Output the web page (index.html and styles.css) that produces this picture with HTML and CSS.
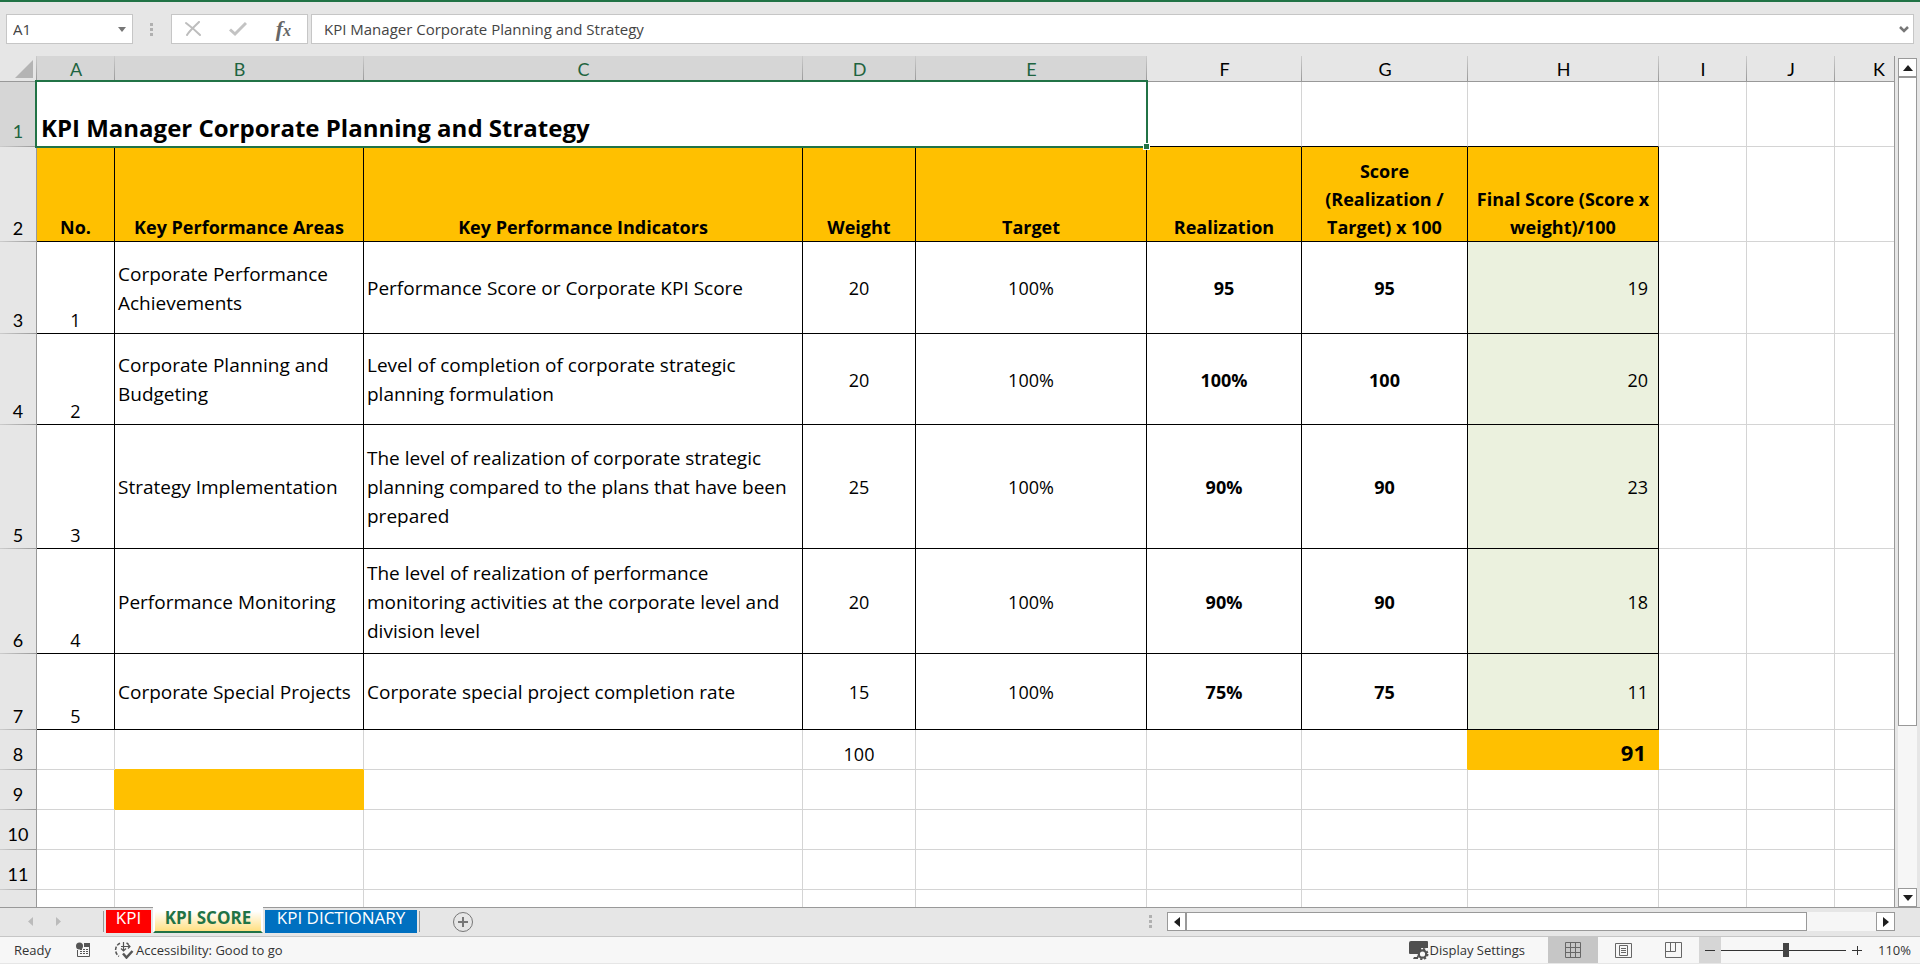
FILE: index.html
```html
<!DOCTYPE html>
<html lang="en">
<head>
<meta charset="utf-8">
<title>KPI Manager Corporate Planning and Strategy</title>
<link rel="stylesheet" href="styles.css">
</head>
<body>
<div class="app">
  <header class="formula-bar">
    <div class="name-box">
      <input class="name-input" type="text" value="A1" aria-label="Name box">
      <button class="plain name-drop" aria-label="Open name list"><svg width="8" height="5" viewBox="0 0 8 5"><path d="M0 0h8L4 5z" fill="#777"/></svg></button>
    </div>
    <svg class="grip" width="3" height="13" viewBox="0 0 3 13"><path d="M0 0h3v3H0zM0 5h3v3H0zM0 10h3v3H0z" fill="#b0b0b0"/></svg>
    <div class="entry-tools">
      <button class="plain" aria-label="Cancel"><svg width="16" height="16" viewBox="0 0 16 16"><path d="M1 2C5 5 11 10 15 14M14 1C10 5 5 9 2 14" fill="none" stroke="#bdbdbd" stroke-width="2" stroke-linecap="round"/></svg></button>
      <button class="plain" aria-label="Enter"><svg width="18" height="16" viewBox="0 0 18 16"><path d="M1 8.500L6 13L17 2" fill="none" stroke="#c3c3c3" stroke-width="3"/></svg></button>
      <button class="plain fx" aria-label="Insert function">f<span class="fx-x">x</span></button>
    </div>
    <div class="formula-box">
      <input class="formula-input" type="text" value="KPI Manager Corporate Planning and Strategy" aria-label="Formula">
      <button class="plain formula-drop" aria-label="Expand formula bar"><svg width="10" height="7" viewBox="0 0 10 7"><path d="M1 1L5 5L9 1" fill="none" stroke="#777" stroke-width="2.500"/></svg></button>
    </div>
  </header>

  <main class="workspace">
    <div class="grid">
      <table class="sheet">
        <colgroup>
          <col class="w-row"><col class="w-a"><col class="w-b"><col class="w-c"><col class="w-d"><col class="w-e"><col class="w-f"><col class="w-g"><col class="w-h"><col class="w-i"><col class="w-i"><col class="w-i">
        </colgroup>
        <thead>
          <tr>
            <th class="corner"><svg width="18" height="18" viewBox="0 0 18 18"><path d="M18 0v18H0z" fill="#b4b4b4"/></svg></th>
            <th class="on" scope="col">A</th><th class="on" scope="col">B</th><th class="on" scope="col">C</th><th class="on" scope="col">D</th><th class="on" scope="col">E</th><th scope="col">F</th><th scope="col">G</th><th scope="col">H</th><th scope="col">I</th><th scope="col">J</th><th scope="col">K</th>
          </tr>
        </thead>
        <tbody>
          <tr class="r1">
            <th class="on" scope="row">1</th>
            <td class="title" colspan="5">KPI Manager Corporate Planning and Strategy<span class="selection"><span class="handle"></span></span></td>
            <td class="over"></td><td class="over"></td><td class="over"></td><td></td><td></td><td></td>
          </tr>
          <tr class="r2 heads">
            <th scope="row">2</th>
            <td>No.</td><td>Key Performance Areas</td><td>Key Performance Indicators</td><td>Weight</td><td>Target</td><td>Realization</td><td>Score<br>(Realization /<br>Target) x 100</td><td>Final Score (Score x<br>weight)/100</td><td></td><td></td><td></td>
          </tr>
          <tr class="r3 data">
            <th scope="row">3</th>
            <td>1</td><td>Corporate Performance<br>Achievements</td><td>Performance Score or Corporate KPI Score</td><td>20</td><td>100%</td><td>95</td><td>95</td><td>19</td><td></td><td></td><td></td>
          </tr>
          <tr class="r4 data">
            <th scope="row">4</th>
            <td>2</td><td>Corporate Planning and<br>Budgeting</td><td>Level of completion of corporate strategic<br>planning formulation</td><td>20</td><td>100%</td><td>100%</td><td>100</td><td>20</td><td></td><td></td><td></td>
          </tr>
          <tr class="r5 data">
            <th scope="row">5</th>
            <td>3</td><td>Strategy Implementation</td><td>The level of realization of corporate strategic<br>planning compared to the plans that have been<br>prepared</td><td>25</td><td>100%</td><td>90%</td><td>90</td><td>23</td><td></td><td></td><td></td>
          </tr>
          <tr class="r6 data">
            <th scope="row">6</th>
            <td>4</td><td>Performance Monitoring</td><td>The level of realization of performance<br>monitoring activities at the corporate level and<br>division level</td><td>20</td><td>100%</td><td>90%</td><td>90</td><td>18</td><td></td><td></td><td></td>
          </tr>
          <tr class="r7 data">
            <th scope="row">7</th>
            <td>5</td><td>Corporate Special Projects</td><td>Corporate special project completion rate</td><td>15</td><td>100%</td><td>75%</td><td>75</td><td>11</td><td></td><td></td><td></td>
          </tr>
          <tr class="short">
            <th scope="row">8</th>
            <td></td><td class="over-fill"></td><td></td><td class="sum">100</td><td></td><td></td><td class="before-fill"></td><td class="total">91</td><td></td><td></td><td></td>
          </tr>
          <tr class="short">
            <th scope="row">9</th>
            <td class="before-fill"></td><td class="fill"></td><td></td><td></td><td></td><td></td><td></td><td></td><td></td><td></td><td></td>
          </tr>
          <tr class="short">
            <th scope="row">10</th>
            <td></td><td></td><td></td><td></td><td></td><td></td><td></td><td></td><td></td><td></td><td></td>
          </tr>
          <tr class="short">
            <th scope="row">11</th>
            <td></td><td></td><td></td><td></td><td></td><td></td><td></td><td></td><td></td><td></td><td></td>
          </tr>
          <tr class="short">
            <th></th>
            <td></td><td></td><td></td><td></td><td></td><td></td><td></td><td></td><td></td><td></td><td></td>
          </tr>
        </tbody>
      </table>
    </div>
    <div class="vscroll">
      <button class="plain arrow" aria-label="Scroll up"><svg width="10" height="6" viewBox="0 0 10 6"><path d="M0 6h10L5 0z" fill="#1e1e1e"/></svg></button>
      <div class="track"><div class="thumb"></div></div>
      <button class="plain arrow" aria-label="Scroll down"><svg width="10" height="6" viewBox="0 0 10 6"><path d="M0 0h10L5 6z" fill="#1e1e1e"/></svg></button>
    </div>
  </main>

  <nav class="tab-bar" aria-label="Sheets">
    <div class="tab-nav">
      <button class="plain" aria-label="Previous sheets"><svg width="5" height="9" viewBox="0 0 5 9"><path d="M5 0v9L0 4.500z" fill="#bbb"/></svg></button>
      <button class="plain" aria-label="Next sheets"><svg width="5" height="9" viewBox="0 0 5 9"><path d="M0 0v9L5 4.500z" fill="#bbb"/></svg></button>
    </div>
    <div class="tabs">
      <button class="plain tab red">KPI</button>
      <button class="plain tab active">KPI SCORE</button>
      <button class="plain tab blue">KPI DICTIONARY</button>
    </div>
    <button class="plain add" aria-label="New sheet"><svg width="22" height="22" viewBox="0 0 22 22"><circle cx="11" cy="11" r="9.500" fill="none" stroke="#777"/><path d="M11 6v10M6 11h10" stroke="#777" stroke-width="2"/></svg></button>
    <svg class="grip" width="3" height="13" viewBox="0 0 3 13"><path d="M0 0h3v3H0zM0 5h3v3H0zM0 10h3v3H0z" fill="#b0b0b0"/></svg>
    <div class="hscroll">
      <button class="plain arrow" aria-label="Scroll left"><svg width="6" height="10" viewBox="0 0 6 10"><path d="M6 0v10L0 5z" fill="#1e1e1e"/></svg></button>
      <div class="track"><div class="thumb"></div></div>
      <button class="plain arrow" aria-label="Scroll right"><svg width="6" height="10" viewBox="0 0 6 10"><path d="M0 0v10L6 5z" fill="#1e1e1e"/></svg></button>
    </div>
  </nav>

  <footer class="status-bar">
    <span class="ready">Ready</span>
    <button class="plain macro" aria-label="Record macro"><svg width="15" height="16" viewBox="0 0 15 16"><path d="M1.500 8v6.500h12V2" fill="none" stroke="#555"/><path d="M8 1h6v4H8z" fill="#555"/><circle cx="3.500" cy="4" r="3.500" fill="#555"/><path d="M4 7.500h2m1 0h2m1 0h2M4 9.500h2m1 0h2m1 0h2M4 11.500h2m1 0h2m1 0h2" stroke="#555"/></svg></button>
    <button class="plain access"><svg width="20" height="17" viewBox="0 0 20 17"><path d="M6 1.200A7.500 7.500 0 0 0 5 14.300M14.500 2.500A7 7 0 0 0 12.500 1" fill="none" stroke="#555" stroke-width="1.500" stroke-dasharray="3.500 1.500"/><path d="M9.500 0v9M7 6.500l2.500 2.500L12 6.500M7 4.500h9M14 2.500l2 2-2 2" fill="none" stroke="#555" stroke-width="1.200"/><path d="M9 11.500l3.500 4L18.500 9" fill="none" stroke="#555" stroke-width="2.500"/></svg>Accessibility: Good to go</button>
    <button class="plain display"><svg width="20" height="19" viewBox="0 0 20 19"><path d="M2 0h16a1 1 0 0 1 1 1v6H12v3l-3 3H1a1 1 0 0 1-1-1V2a2 2 0 0 1 2-2zM5 16h4v2H4z" fill="#505050"/><circle cx="13.500" cy="13" r="3.700" fill="none" stroke="#505050" stroke-width="2.200"/><circle cx="13.500" cy="13" r="5.200" fill="none" stroke="#505050" stroke-width="1.600" stroke-dasharray="2.200 1.880"/></svg>Display Settings</button>
    <div class="views">
      <button class="plain view current" aria-label="Normal"><svg width="16" height="16" viewBox="0 0 16 16"><path d="M.5.500h15v15H.500zM5.500 0v16M10.500 0v16M0 5.500h16M0 10.500h16" fill="none" stroke="#666"/></svg></button>
      <button class="plain view" aria-label="Page layout"><svg width="17" height="15" viewBox="0 0 17 15"><path d="M.5.500h16v14H.500zM4.500 2.500h8v10h-8zM6 5.500h5M6 7.500h5M6 9.500h5" fill="none" stroke="#666"/></svg></button>
      <button class="plain view" aria-label="Page break preview"><svg width="17" height="16" viewBox="0 0 17 16"><path d="M.5.500h16v15H.500zM.5 9.500h10V.500M5.500.500v9" fill="none" stroke="#666"/></svg></button>
    </div>
    <div class="zoom">
      <button class="plain zoom-out" aria-label="Zoom out"><svg width="10" height="10" viewBox="0 0 10 10"><path d="M0 5.500h10" stroke="#333"/></svg></button>
      <input class="zoom-range" type="range" min="0" max="100" value="52" aria-label="Zoom">
      <button class="plain zoom-in" aria-label="Zoom in"><svg width="10" height="10" viewBox="0 0 10 10"><path d="M0 5.500h10M5.500 1v9" stroke="#333"/></svg></button>
      <button class="plain percent">110%</button>
    </div>
  </footer>
</div>
</body>
</html>
```
FILE: styles.css
```css
:root {
  --green: #217346;
  --gold: #ffc000;
  --chrome: #e6e6e6;
  --line: #d4d4d4;
  --edge: #999;
  --ui: "Open Sans", "Noto Sans", sans-serif;
  --head: Lato, "Open Sans", sans-serif;
}

* { box-sizing: border-box; }

body {
  margin: 0;
  background: #fff;
  color: #000;
  font-family: var(--ui);
}

.app {
  display: flex;
  flex-direction: column;
  height: 100vh;
  padding-bottom: 1px;
  overflow: hidden;
  background: var(--chrome);
}

.plain {
  display: inline-flex;
  align-items: center;
  justify-content: center;
  margin: 0;
  padding: 0;
  border: 0;
  background: none;
  color: inherit;
  font: inherit;
}

svg { display: block; flex: none; }

/* Formula bar */
.formula-bar {
  display: flex;
  flex: none;
  align-items: center;
  height: 56px;
  padding: 0 6px;
  border-top: 2px solid var(--green);
}

.name-box, .entry-tools, .formula-box {
  display: flex;
  align-items: center;
  height: 30px;
  border: 1px solid #c6c6c6;
  background: #fff;
}

.name-box { width: 127px; padding: 0 6px; }
.formula-bar .grip { margin: 0 18px 0 17px; }
.entry-tools { width: 137px; justify-content: space-between; padding: 0 16px 0 13px; }
.formula-box { flex: 1; margin-left: 3px; padding: 0 4px 0 12px; }

.name-input, .formula-input {
  flex: 1;
  min-width: 0;
  padding: 0;
  border: 0;
  outline: 0;
  background: none;
  color: #444;
  font: 15px/20px var(--ui);
}

.fx { color: #666; font: italic bold 22px/24px "Liberation Serif", serif; }
.fx-x { padding-top: 4px; font-size: 16px; }

/* Grid */
.workspace {
  display: flex;
  flex: 1;
  min-height: 0;
  padding-right: 3px;
}

.grid {
  flex: 1;
  min-width: 0;
  overflow: hidden;
  margin-right: 3px;
  border-right: 1px solid var(--edge);
}

.sheet {
  width: 1923px;
  table-layout: fixed;
  border-collapse: separate;
  border-spacing: 0;
  font-size: 18px;
  line-height: 29px;
  white-space: nowrap;
}

.w-row { width: 37px; }
.w-a { width: 78px; }
.w-b { width: 249px; }
.w-c { width: 439px; }
.w-d { width: 113px; }
.w-e { width: 231px; }
.w-f { width: 155px; }
.w-g { width: 166px; }
.w-h { width: 191px; }
.w-i { width: 88px; }

.sheet th {
  padding: 0;
  background: linear-gradient(90deg, #ccc, var(--edge)) bottom / 100% 1px no-repeat var(--chrome);
  border-right: 1px solid var(--edge);
  font-family: var(--head);
  font-weight: 400;
  line-height: 27px;
  text-align: center;
  vertical-align: bottom;
}

.sheet thead th {
  height: 26px;
  background: linear-gradient(#ccc, var(--edge)) right / 1px 100% no-repeat var(--chrome);
  border-right: 0;
  border-bottom: 1px solid var(--edge);
  line-height: 23px;
}

.sheet th.on { background-color: #d6d6d6; color: #1e6440; }
.sheet .corner svg { margin: 0 0 3px 15px; }
.sheet .r1 th { line-height: 31px; }
.sheet .short th { line-height: 31px; }

.sheet td {
  padding: 0 3px;
  background: #fff;
  border-right: 1px solid var(--line);
  border-bottom: 1px solid var(--line);
}

.r1 { height: 65px; }
.r2 { height: 95px; }
.r3 { height: 92px; }
.r4 { height: 91px; }
.r5 { height: 124px; }
.r6 { height: 105px; }
.r7 { height: 76px; }
.short { height: 40px; }

.sheet .title {
  position: relative;
  padding: 0 4px;
  font-size: 24px;
  font-weight: 700;
  line-height: 37px;
  vertical-align: bottom;
}

.selection {
  position: absolute;
  z-index: 1;
  inset: -2px;
  border: 2px solid var(--green);
}

.handle {
  position: absolute;
  right: -4px;
  bottom: -4px;
  width: 7px;
  height: 7px;
  border: 1px solid #fff;
  background: var(--green);
}

.sheet .over { border-bottom-color: #000; }

.heads td:nth-child(-n+9), .data td:nth-child(-n+9) { border-color: #000; }

.heads td:nth-child(-n+9) {
  background: var(--gold);
  font-weight: 700;
  line-height: 28px;
  text-align: center;
  vertical-align: bottom;
}

.data td { padding-top: 2px; text-align: center; vertical-align: middle; }
.data td:nth-child(2) { line-height: 25px; vertical-align: bottom; }
.data td:nth-child(3), .data td:nth-child(4) { font-size: 19px; text-align: left; }
.data td:nth-child(7), .data td:nth-child(8) { font-weight: 700; }
.data td:nth-child(9) { padding-right: 10px; background: #ebf1de; text-align: right; }

.sheet .sum { text-align: center; vertical-align: bottom; }
.sheet .total {
  padding-right: 12px;
  background: var(--gold);
  border-color: var(--gold);
  font-size: 22px;
  font-weight: 700;
  line-height: 34px;
  text-align: right;
  vertical-align: bottom;
}
.sheet .fill { background: var(--gold); border-color: var(--gold); }
.sheet .before-fill { border-right-color: var(--gold); }
.sheet .over-fill { border-bottom-color: var(--gold); }

/* Scroll bars */
.track { flex: 1; background: #f6f6f6; }
.thumb { background: #fff; border: 1px solid var(--edge); }
.arrow { width: 19px; height: 19px; background: #fff; border: 1px solid var(--edge); }

.vscroll {
  display: flex;
  flex: none;
  flex-direction: column;
  width: 19px;
  padding-top: 2px;
}
.vscroll .thumb { height: 80%; }

.hscroll {
  display: flex;
  width: 728px;
  height: 19px;
  margin: 4px 25px 0 15px;
}
.hscroll .thumb { width: 90%; height: 100%; }

/* Sheet tabs */
.tab-bar {
  display: flex;
  flex: none;
  align-items: flex-start;
  height: 30px;
  border-top: 1px solid var(--edge);
  border-bottom: 1px solid #c6c6c6;
}

.tab-nav { display: flex; gap: 23px; width: 103px; padding: 9px 0 0 28px; }
.tab-bar > .grip { margin: 7px 0 0 auto; }

.tabs {
  display: flex;
  align-items: flex-start;
  gap: 2px;
  padding: 0 2px;
  background:
    linear-gradient(var(--edge), var(--edge)) left 3px / 1px 21px no-repeat,
    linear-gradient(var(--edge), var(--edge)) right 3px / 1px 21px no-repeat;
}

.tab {
  align-items: flex-start;
  height: 23px;
  margin-top: 2px;
  color: #fff;
  font-size: 17px;
  line-height: 16px;
}
.red { width: 45px; margin-left: 1px; background: #f00; }
.blue { width: 152px; margin-right: 1px; background: #0070c0; }
.active {
  width: 110px;
  height: 26px;
  margin-top: -1px;
  border: 2px solid #fff;
  border-bottom-color: var(--green);
  background: linear-gradient(#fff 10%, #ffdf80);
  color: var(--green);
  font-weight: 700;
  line-height: 18px;
}

.add { margin: 3px 0 0 32px; }

/* Status bar */
.status-bar {
  display: flex;
  flex: none;
  align-items: center;
  height: 26px;
  background: #f7f7f7;
  color: #333;
  font: 13px/18px var(--ui);
}

.ready { width: 76px; padding-left: 14px; }
.macro { margin-right: 23px; }
.access { gap: 2px; }
.display { margin-left: auto; gap: 1px; }
.views { display: flex; height: 100%; margin: 0 1px 0 23px; }
.view { width: 50px; height: 100%; }
.current { background: #c6c6c6; }
.zoom { display: flex; align-items: center; height: 100%; }
.zoom-out { width: 22px; height: 100%; background: #d6d6d6; }
.zoom-in { width: 22px; height: 100%; }
.percent { width: 52px; height: 100%; padding-right: 9px; justify-content: flex-end; }

.zoom-range {
  width: 125px;
  height: 14px;
  margin: 0;
  appearance: none;
  background: linear-gradient(#333, #333) center / 100% 1px no-repeat;
}
.zoom-range::-webkit-slider-thumb {
  appearance: none;
  width: 6px;
  height: 14px;
  background: #444;
}
```
